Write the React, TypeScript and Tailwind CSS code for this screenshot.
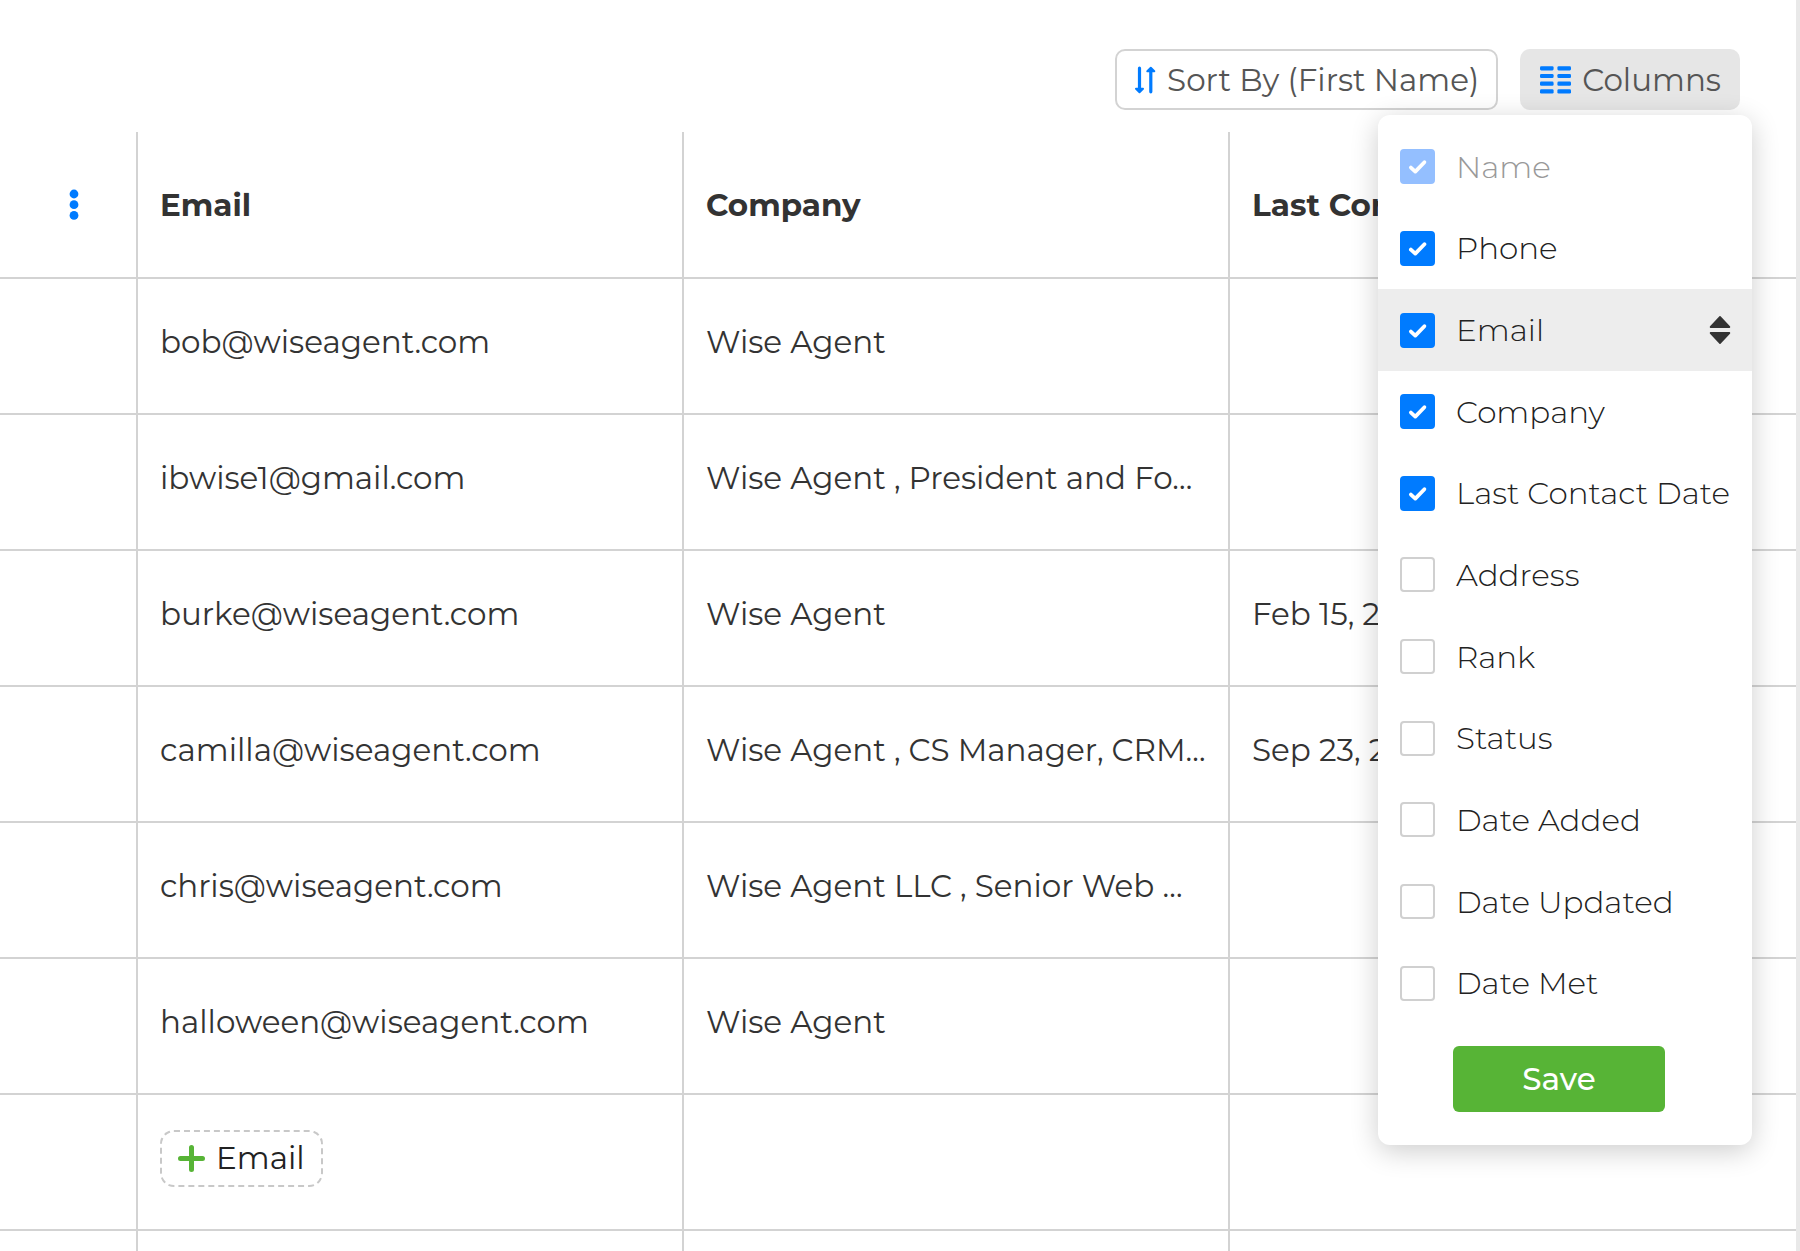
import { useState } from 'react';

type Row = { email?: string; company?: string; lastContact?: string };

const rows: Row[] = [
  { email: 'bob@wiseagent.com', company: 'Wise Agent' },
  { email: 'ibwise1@gmail.com', company: 'Wise Agent , President and Fo…' },
  { email: 'burke@wiseagent.com', company: 'Wise Agent', lastContact: 'Feb 15, 2024' },
  { email: 'camilla@wiseagent.com', company: 'Wise Agent , CS Manager, CRM…', lastContact: 'Sep 23, 2024' },
  { email: 'chris@wiseagent.com', company: 'Wise Agent LLC , Senior Web …' },
  { email: 'halloween@wiseagent.com', company: 'Wise Agent' },
  {},
];

type Column = { label: string; checked: boolean; locked?: boolean };

const initialColumns: Column[] = [
  { label: 'Name', checked: true, locked: true },
  { label: 'Phone', checked: true },
  { label: 'Email', checked: true },
  { label: 'Company', checked: true },
  { label: 'Last Contact Date', checked: true },
  { label: 'Address', checked: false },
  { label: 'Rank', checked: false },
  { label: 'Status', checked: false },
  { label: 'Date Added', checked: false },
  { label: 'Date Updated', checked: false },
  { label: 'Date Met', checked: false },
];

function SortIcon() {
  return (
    <svg width="22" height="28" viewBox="0 0 22 28" fill="none" stroke="#007bff" strokeLinecap="round" strokeLinejoin="round" aria-hidden="true">
      <path d="M5.5 2.2V24M16.8 4V25.8" strokeWidth="3.2" />
      <path d="M2 22.8h7l-3.5 3.4zM13.3 5.2h7l-3.5-3.4z" fill="#007bff" strokeWidth="2" />
    </svg>
  );
}

function ColumnsIcon() {
  return (
    <svg width="31" height="28" viewBox="0 0 31 28" fill="#007bff" aria-hidden="true">
      {[0.2, 7.9, 15.6, 23.3].map((y) => (
        <g key={y}>
          <rect x="0" y={y} width="13.6" height="4.2" rx="1.3" />
          <rect x="17.4" y={y} width="13.6" height="4.2" rx="1.3" />
        </g>
      ))}
    </svg>
  );
}

function MoreIcon() {
  return (
    <svg width="10" height="32" viewBox="0 0 10 32" fill="#007bff" aria-hidden="true">
      <circle cx="5" cy="5" r="4.4" />
      <circle cx="5" cy="15.7" r="4.4" />
      <circle cx="5" cy="26.4" r="4.4" />
    </svg>
  );
}

function PlusIcon() {
  return (
    <svg width="27" height="27" viewBox="0 0 27 27" stroke="#57b436" strokeWidth="5" strokeLinecap="round" aria-hidden="true">
      <path d="M13.5 2.5v22M2.5 13.5h22" />
    </svg>
  );
}

function DragIcon() {
  return (
    <svg width="22" height="30" viewBox="0 0 22 30" fill="#333" stroke="#333" strokeWidth="1.6" strokeLinejoin="round" aria-hidden="true">
      <path d="M11 1.8L20.4 11.7V12.2H1.6V11.7zM11 28.2L20.4 18.3V17.8H1.6V18.3z" />
    </svg>
  );
}

function ColumnOption({ column, active, onToggle }: { column: Column; active: boolean; onToggle: () => void }) {
  return (
    <li className={active ? 'flex items-center bg-[#ededed] pl-[22px] pr-[21px]' : 'flex items-center pl-[22px] pr-[21px]'}>
      <label className="flex items-center gap-[21px] whitespace-nowrap font-light text-[#222] has-disabled:text-[#999]">
        <span className="relative flex">
          <input
            type="checkbox"
            checked={column.checked}
            disabled={column.locked}
            onChange={onToggle}
            className="peer size-[35px] appearance-none rounded border-2 border-[#d0d0d0] bg-white checked:border-[#007bff] checked:bg-[#007bff] disabled:border-[#94bfff] disabled:bg-[#94bfff]"
          />
          <svg
            className="pointer-events-none absolute inset-0 hidden peer-checked:block"
            width="35"
            height="35"
            viewBox="0 0 35 35"
            fill="none"
            stroke="#fff"
            strokeWidth="3.8"
            strokeLinecap="round"
            strokeLinejoin="round"
            aria-hidden="true"
          >
            <path d="M10.9 18.6L15.3 22.6L24.4 13.2" />
          </svg>
        </span>
        {column.label}
      </label>
      {active && (
        <span className="ml-auto">
          <DragIcon />
        </span>
      )}
    </li>
  );
}

export default function App() {
  const [columns, setColumns] = useState(initialColumns);
  const [open, setOpen] = useState(true);

  const toggle = (label: string) =>
    setColumns((list) => list.map((c) => (c.label === label ? { ...c, checked: !c.checked } : c)));

  const cell = 'h-[136px] truncate border-b-2 border-r-2 border-[#d3d3d3] px-[22px] pb-2 last:border-r-0';
  const head = 'h-[147px] truncate border-b-2 border-r-2 border-[#d3d3d3] px-[22px] text-left font-bold last:border-r-0';

  return (
    <main className="h-screen overflow-hidden border-r-4 border-[#e9e9e9] bg-white font-[Montserrat,Inter,sans-serif] text-[31px] leading-10 text-[#333]">
      <div className="flex justify-end gap-[22px] pb-[22px] pr-14 pt-[49px] text-[#555]">
        <button type="button" className="flex h-[61px] items-center gap-[11px] rounded-[10px] border-2 border-[#d3d3d3] px-[17px]">
          <SortIcon />
          Sort By (First Name)
        </button>
        <div className="relative">
          <button
            type="button"
            aria-expanded={open}
            onClick={() => setOpen(!open)}
            className="flex h-[61px] items-center gap-[11px] rounded-[10px] bg-[#e6e6e6] pl-5 pr-[19px]"
          >
            <ColumnsIcon />
            Columns
          </button>
          {open && (
            <form
              onSubmit={(e) => e.preventDefault()}
              className="absolute -right-3 top-[66px] z-10 w-[374px] rounded-xl bg-white pb-[33px] pt-[11px] shadow-[0_6px_28px_rgba(0,0,0,0.2)]"
            >
              <ul className="grid h-[898px] auto-rows-fr">
                {columns.map((c) => (
                  <ColumnOption key={c.label} column={c} active={c.label === 'Email'} onToggle={() => toggle(c.label)} />
                ))}
              </ul>
              <button type="submit" className="ml-[75px] mt-[22px] h-[66px] w-[212px] rounded-md bg-[#57b436] font-medium text-white">
                Save
              </button>
            </form>
          )}
        </div>
      </div>

      <table className="w-full table-fixed border-separate border-spacing-0">
        <colgroup>
          <col className="w-[138px]" />
          <col className="w-[546px]" />
          <col className="w-[546px]" />
          <col />
        </colgroup>
        <thead>
          <tr>
            <th className="h-[147px] border-b-2 border-r-2 border-[#d3d3d3] pr-[57px]">
              <button type="button" aria-label="More options" className="ml-auto block">
                <MoreIcon />
              </button>
            </th>
            <th className={head}>Email</th>
            <th className={head}>Company</th>
            <th className={head}>Last Contact Date</th>
          </tr>
        </thead>
        <tbody>
          {rows.map((row, i) => (
            <tr key={i}>
              <td className={cell} />
              <td className={cell}>
                {row.email ?? (
                  <button type="button" className="flex h-[57px] items-center gap-[11px] rounded-[14px] border-2 border-dashed border-[#c8c8c8] px-4 text-[#222]">
                    <PlusIcon />
                    Email
                  </button>
                )}
              </td>
              <td className={cell}>{row.company}</td>
              <td className={cell}>{row.lastContact}</td>
            </tr>
          ))}
          <tr>
            <td className={cell} />
            <td className={cell} />
            <td className={cell} />
            <td className={cell} />
          </tr>
        </tbody>
      </table>
    </main>
  );
}
